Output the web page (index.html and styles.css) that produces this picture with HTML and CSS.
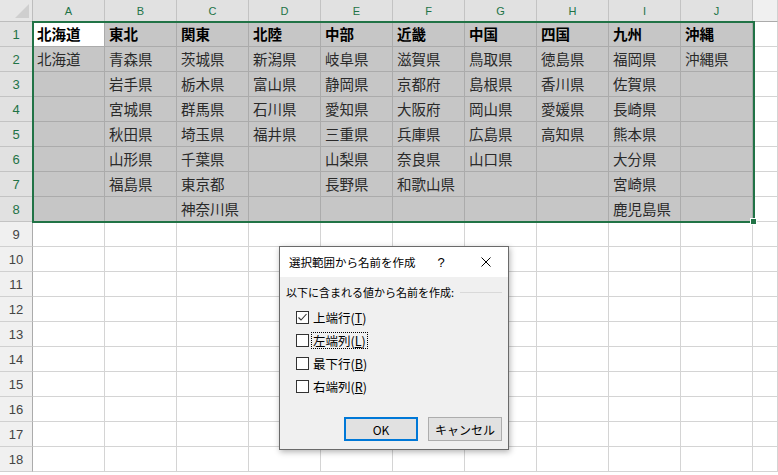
FILE: index.html
```html
<!DOCTYPE html>
<html lang="ja">
<head>
<meta charset="utf-8">
<title>選択範囲から名前を作成</title>
<link rel="stylesheet" href="styles.css">
</head>
<body>
<div class="sheet">
  <div class="corner"></div>
  <div class="ch sel">A</div><div class="ch sel">B</div><div class="ch sel">C</div><div class="ch sel">D</div><div class="ch sel">E</div><div class="ch sel">F</div><div class="ch sel">G</div><div class="ch sel">H</div><div class="ch sel">I</div><div class="ch sel">J</div><div class="ch"></div>

  <div class="rh sel">1</div>
  <div class="c s b act">北海道</div><div class="c s b">東北</div><div class="c s b">関東</div><div class="c s b">北陸</div><div class="c s b">中部</div><div class="c s b">近畿</div><div class="c s b">中国</div><div class="c s b">四国</div><div class="c s b">九州</div><div class="c s b">沖縄</div><div class="c"></div>

  <div class="rh sel">2</div>
  <div class="c s">北海道</div><div class="c s">青森県</div><div class="c s">茨城県</div><div class="c s">新潟県</div><div class="c s">岐阜県</div><div class="c s">滋賀県</div><div class="c s">鳥取県</div><div class="c s">徳島県</div><div class="c s">福岡県</div><div class="c s">沖縄県</div><div class="c"></div>

  <div class="rh sel">3</div>
  <div class="c s"></div><div class="c s">岩手県</div><div class="c s">栃木県</div><div class="c s">富山県</div><div class="c s">静岡県</div><div class="c s">京都府</div><div class="c s">島根県</div><div class="c s">香川県</div><div class="c s">佐賀県</div><div class="c s"></div><div class="c"></div>

  <div class="rh sel">4</div>
  <div class="c s"></div><div class="c s">宮城県</div><div class="c s">群馬県</div><div class="c s">石川県</div><div class="c s">愛知県</div><div class="c s">大阪府</div><div class="c s">岡山県</div><div class="c s">愛媛県</div><div class="c s">長崎県</div><div class="c s"></div><div class="c"></div>

  <div class="rh sel">5</div>
  <div class="c s"></div><div class="c s">秋田県</div><div class="c s">埼玉県</div><div class="c s">福井県</div><div class="c s">三重県</div><div class="c s">兵庫県</div><div class="c s">広島県</div><div class="c s">高知県</div><div class="c s">熊本県</div><div class="c s"></div><div class="c"></div>

  <div class="rh sel">6</div>
  <div class="c s"></div><div class="c s">山形県</div><div class="c s">千葉県</div><div class="c s"></div><div class="c s">山梨県</div><div class="c s">奈良県</div><div class="c s">山口県</div><div class="c s"></div><div class="c s">大分県</div><div class="c s"></div><div class="c"></div>

  <div class="rh sel">7</div>
  <div class="c s"></div><div class="c s">福島県</div><div class="c s">東京都</div><div class="c s"></div><div class="c s">長野県</div><div class="c s">和歌山県</div><div class="c s"></div><div class="c s"></div><div class="c s">宮崎県</div><div class="c s"></div><div class="c"></div>

  <div class="rh sel">8</div>
  <div class="c s"></div><div class="c s"></div><div class="c s">神奈川県</div><div class="c s"></div><div class="c s"></div><div class="c s"></div><div class="c s"></div><div class="c s"></div><div class="c s">鹿児島県</div><div class="c s"></div><div class="c"></div>

  <div class="rh">9</div>
  <div class="c"></div><div class="c"></div><div class="c"></div><div class="c"></div><div class="c"></div><div class="c"></div><div class="c"></div><div class="c"></div><div class="c"></div><div class="c"></div><div class="c"></div>
  <div class="rh">10</div>
  <div class="c"></div><div class="c"></div><div class="c"></div><div class="c"></div><div class="c"></div><div class="c"></div><div class="c"></div><div class="c"></div><div class="c"></div><div class="c"></div><div class="c"></div>
  <div class="rh">11</div>
  <div class="c"></div><div class="c"></div><div class="c"></div><div class="c"></div><div class="c"></div><div class="c"></div><div class="c"></div><div class="c"></div><div class="c"></div><div class="c"></div><div class="c"></div>
  <div class="rh">12</div>
  <div class="c"></div><div class="c"></div><div class="c"></div><div class="c"></div><div class="c"></div><div class="c"></div><div class="c"></div><div class="c"></div><div class="c"></div><div class="c"></div><div class="c"></div>
  <div class="rh">13</div>
  <div class="c"></div><div class="c"></div><div class="c"></div><div class="c"></div><div class="c"></div><div class="c"></div><div class="c"></div><div class="c"></div><div class="c"></div><div class="c"></div><div class="c"></div>
  <div class="rh">14</div>
  <div class="c"></div><div class="c"></div><div class="c"></div><div class="c"></div><div class="c"></div><div class="c"></div><div class="c"></div><div class="c"></div><div class="c"></div><div class="c"></div><div class="c"></div>
  <div class="rh">15</div>
  <div class="c"></div><div class="c"></div><div class="c"></div><div class="c"></div><div class="c"></div><div class="c"></div><div class="c"></div><div class="c"></div><div class="c"></div><div class="c"></div><div class="c"></div>
  <div class="rh">16</div>
  <div class="c"></div><div class="c"></div><div class="c"></div><div class="c"></div><div class="c"></div><div class="c"></div><div class="c"></div><div class="c"></div><div class="c"></div><div class="c"></div><div class="c"></div>
  <div class="rh">17</div>
  <div class="c"></div><div class="c"></div><div class="c"></div><div class="c"></div><div class="c"></div><div class="c"></div><div class="c"></div><div class="c"></div><div class="c"></div><div class="c"></div><div class="c"></div>
  <div class="rh">18</div>
  <div class="c"></div><div class="c"></div><div class="c"></div><div class="c"></div><div class="c"></div><div class="c"></div><div class="c"></div><div class="c"></div><div class="c"></div><div class="c"></div><div class="c"></div>
</div>

<div class="selection"><span class="handle"></span></div>

<div class="dialog">
  <div class="title">
    <span class="title-text">選択範囲から名前を作成</span>
    <span class="help">?</span>
    <span class="close">
      <svg width="10" height="10" viewBox="0 0 10 10"><path d="M0.5 0.5L9.5 9.5M9.5 0.5L0.5 9.5" stroke="#000" stroke-width="1" fill="none"/></svg>
    </span>
  </div>
  <div class="body">
    <div class="group">
      <span>以下に含まれる値から名前を作成:</span>
      <span class="rule"></span>
    </div>
    <div class="checks">
      <div class="check">
        <span class="box"><svg width="11" height="11" viewBox="0 0 11 11"><path d="M1.5 5.5L4 8L9.5 2" stroke="#333" stroke-width="1.1" fill="none"/></svg></span>
        <span class="lbl">上端行(<u>T</u>)</span>
      </div>
      <div class="check">
        <span class="box"></span>
        <span class="lbl focus">左端列(<u>L</u>)</span>
      </div>
      <div class="check">
        <span class="box"></span>
        <span class="lbl">最下行(<u>B</u>)</span>
      </div>
      <div class="check">
        <span class="box"></span>
        <span class="lbl">右端列(<u>R</u>)</span>
      </div>
    </div>
    <div class="buttons">
      <span class="btn default">OK</span>
      <span class="btn">キャンセル</span>
    </div>
  </div>
</div>
</body>
</html>
```

FILE: styles.css
```css
html, body {
  margin: 0;
  padding: 0;
}
body {
  width: 778px;
  height: 475px;
  overflow: hidden;
  position: relative;
  background: #ffffff;
  font-family: "Noto Sans CJK JP", "Noto Sans", sans-serif;
}

.sheet {
  display: grid;
  grid-template-columns: 33px repeat(10, 72px) 25px;
  grid-template-rows: 22px repeat(18, 25px);
}

.corner {
  background: #e6e6e6;
  border-right: 1px solid #bdbdbd;
  border-bottom: 1px solid #bdbdbd;
  position: relative;
}
.corner::after {
  content: "";
  position: absolute;
  right: 3px;
  bottom: 3px;
  width: 14px;
  height: 14px;
  background: #cfcfcf;
  clip-path: polygon(100% 0, 100% 100%, 0 100%);
}

.ch {
  background: #f0f0f0;
  border-right: 1px solid #d0d0d0;
  border-bottom: 1px solid #ababab;
  color: #444444;
  font-family: "Liberation Sans", sans-serif;
  font-size: 11px;
  display: flex;
  align-items: center;
  justify-content: center;
}
.ch.sel {
  background: #e1e1e1;
  color: #217346;
  border-right-color: #c3c3c3;
}

.rh {
  background: #f0f0f0;
  border-right: 1px solid #ababab;
  border-bottom: 1px solid #d0d0d0;
  color: #444444;
  font-family: "Liberation Sans", sans-serif;
  font-size: 13px;
  display: flex;
  align-items: center;
  justify-content: center;
}
.rh.sel {
  background: #e1e1e1;
  color: #217346;
  border-bottom-color: #c3c3c3;
}

.c {
  border-right: 1px solid #d4d4d4;
  border-bottom: 1px solid #d4d4d4;
  font-size: 14.5px;
  line-height: 24px;
  padding-left: 4px;
  white-space: nowrap;
  overflow: visible;
  color: #2a2a2a;
}
.c.s {
  background: #c6c6c6;
  border-color: #ababab;
}
.c.b {
  font-weight: bold;
  color: #000000;
}
.c.act {
  background: #ffffff;
}

.selection {
  position: absolute;
  left: 32px;
  top: 21px;
  width: 723px;
  height: 202px;
  box-sizing: border-box;
  border: 2px solid #217346;
}
.handle {
  position: absolute;
  left: 716px;
  top: 195px;
  width: 5px;
  height: 5px;
  background: #217346;
  border: 1px solid #ffffff;
}

.dialog {
  position: absolute;
  left: 279px;
  top: 246px;
  width: 230px;
  height: 204px;
  box-sizing: border-box;
  border: 1px solid #6a6a6a;
  background: #f0f0f0;
  box-shadow: 1px 2px 6px rgba(0, 0, 0, 0.3);
  display: flex;
  flex-direction: column;
  color: #000000;
}

.title {
  height: 30px;
  background: #ffffff;
  display: flex;
  align-items: center;
  padding-left: 9px;
  font-size: 11.5px;
}
.title-text {
  flex: 1;
}
.help {
  width: 30px;
  text-align: center;
  margin-right: 8px;
  font-family: "Liberation Sans", sans-serif;
  font-size: 13px;
}
.close {
  width: 44px;
  display: flex;
  align-items: center;
  justify-content: center;
}

.body {
  flex: 1;
  display: flex;
  flex-direction: column;
  padding: 7px 6px 8px 6px;
}

.group {
  display: flex;
  align-items: center;
  height: 16px;
  font-size: 11px;
}
.rule {
  flex: 1;
  border-top: 1px solid #d9d9d9;
  margin-left: 6px;
}

.checks {
  margin-top: 6px;
  margin-left: 10px;
  display: flex;
  flex-direction: column;
}
.check {
  height: 23px;
  display: flex;
  align-items: center;
  font-size: 12px;
}
.box {
  width: 13px;
  height: 13px;
  box-sizing: border-box;
  border: 1px solid #333333;
  background: #ffffff;
  display: flex;
  align-items: center;
  justify-content: center;
  margin-right: 2px;
}
.lbl {
  padding: 0 1px;
  border: 1px solid transparent;
  line-height: 15px;
  font-size: 12.5px;
}
.lbl.focus {
  border: 1px dotted #000000;
}

.buttons {
  margin-top: auto;
  display: flex;
  justify-content: flex-end;
  gap: 10px;
}
.btn {
  width: 74px;
  height: 24px;
  box-sizing: border-box;
  background: #e1e1e1;
  border: 1px solid #adadad;
  display: flex;
  align-items: center;
  justify-content: center;
  font-size: 12px;
}
.btn.default {
  border: 2px solid #0078d7;
}
```
